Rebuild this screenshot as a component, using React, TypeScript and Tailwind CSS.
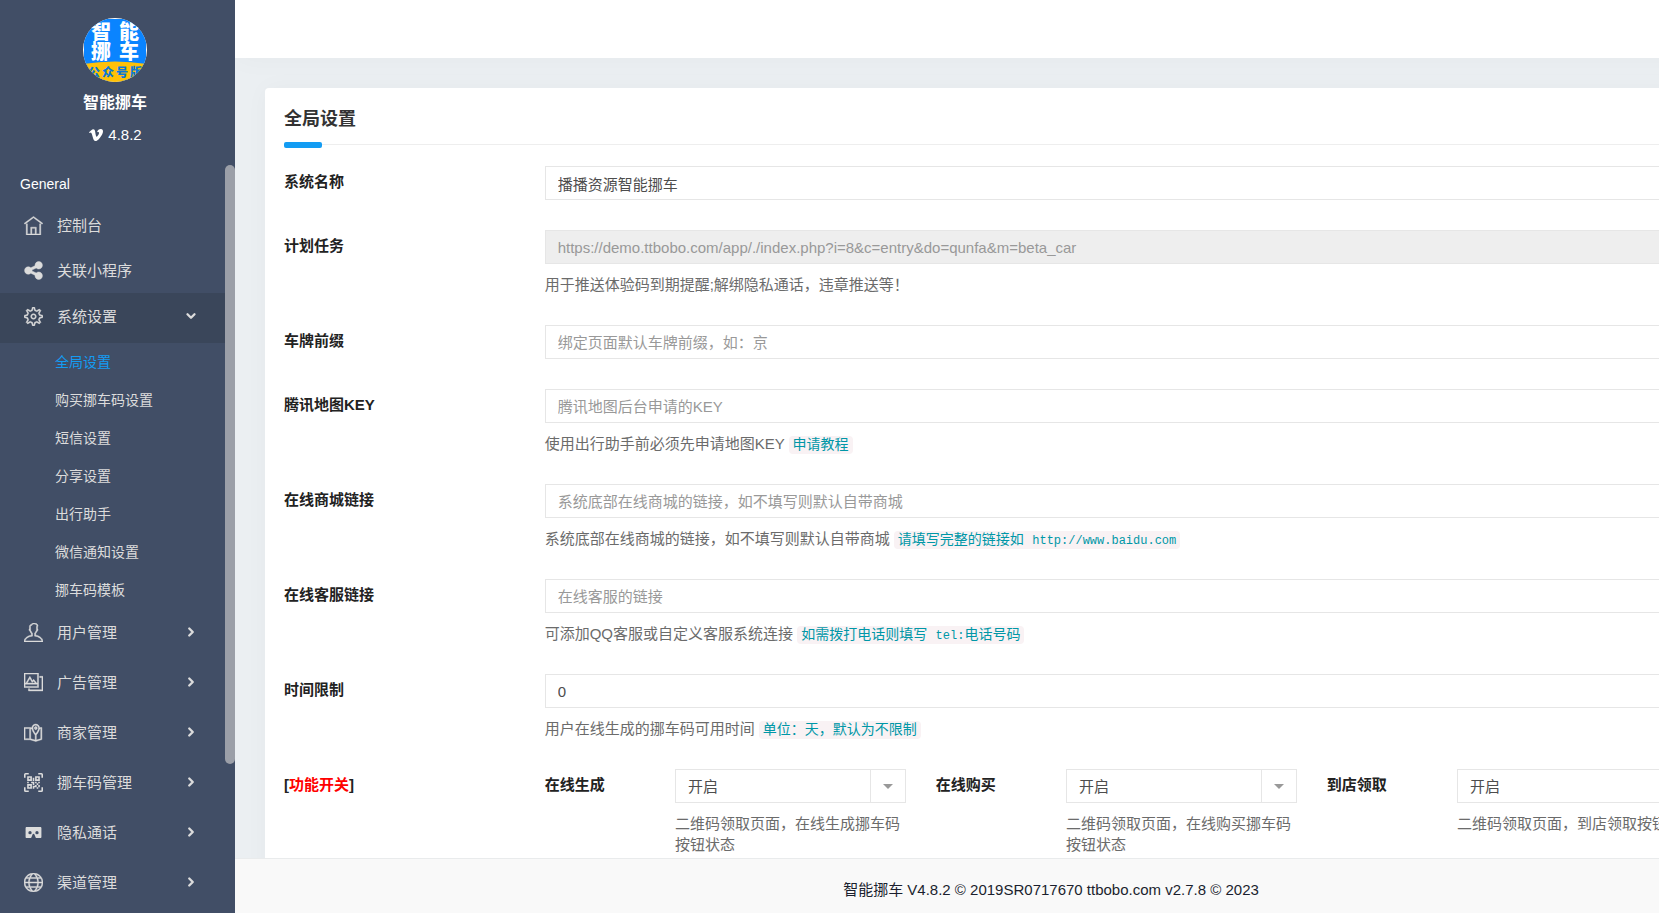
import React from 'react';
import { TfiHome, TfiSharethis, TfiSettings, TfiUser, TfiGallery, TfiMapAlt, TfiWorld } from 'react-icons/tfi';
import { FaVimeoV } from 'react-icons/fa';
import { FiChevronDown, FiChevronRight } from 'react-icons/fi';

type IconType = React.ComponentType<{ className?: string }>;

function QrScanIcon({ className }: { className?: string }) {
  return (
    <svg viewBox="0 0 24 24" fill="currentColor" className={className} aria-hidden="true">
      <path d="M4 4h6v6H4V4m16 0v6h-6V4h6m-6 11h2v-2h-2v-2h2v2h2v-2h2v2h-2v2h2v3h-2v2h-2v-2h-3v2h-2v-4h3v-1m2 0v3h2v-3h-2M4 20v-6h6v6H4M6 6v2h2V6H6m10 0v2h2V6h-2M6 16v2h2v-2H6m-2-5h2v2H4v-2m5 0h4v4h-2v-2H9v-2m2-5h2v4h-2V6M2 2v4H0V2a2 2 0 0 1 2-2h4v2H2m20-2a2 2 0 0 1 2 2v4h-2V2h-4V0h4M2 18v4h4v2H2a2 2 0 0 1-2-2v-4h2m20 4v-4h2v4a2 2 0 0 1-2 2h-4v-2h4z" />
    </svg>
  );
}

function CardboardIcon({ className }: { className?: string }) {
  return (
    <svg viewBox="0 0 24 24" fill="currentColor" className={className} aria-hidden="true">
      <path d="M20.700 5H3.300C2.600 5 2 5.600 2 6.300v11.400c0 .7.6 1.300 1.300 1.300h4.800c.6 0 1-.3 1.200-.8l1.500-3.700c.2-.5.7-.8 1.200-.8s1 .3 1.200.8l1.500 3.700c.2.5.7.8 1.200.8h4.800c.7 0 1.300-.6 1.300-1.300V6.300c0-.7-.6-1.300-1.300-1.300M7.600 14.300a2.100 2.100 0 1 1 0-4.200 2.100 2.100 0 0 1 0 4.200m8.800 0a2.100 2.100 0 1 1 0-4.200 2.100 2.100 0 0 1 0 4.200z" />
    </svg>
  );
}

const topLinks: { label: string; icon: IconType }[] = [
  { label: '控制台', icon: TfiHome },
  { label: '关联小程序', icon: TfiSharethis },
];

const settingLinks = ['全局设置', '购买挪车码设置', '短信设置', '分享设置', '出行助手', '微信通知设置', '挪车码模板'];

const groups: { label: string; icon: IconType; thin?: boolean }[] = [
  { label: '用户管理', icon: TfiUser, thin: true },
  { label: '广告管理', icon: TfiGallery, thin: true },
  { label: '商家管理', icon: TfiMapAlt, thin: true },
  { label: '挪车码管理', icon: QrScanIcon },
  { label: '隐私通话', icon: CardboardIcon },
  { label: '渠道管理', icon: TfiWorld, thin: true },
];

const switches = [
  { id: 'online-create', label: '在线生成', help: '二维码领取页面，在线生成挪车码按钮状态' },
  { id: 'online-buy', label: '在线购买', help: '二维码领取页面，在线购买挪车码按钮状态' },
  { id: 'shop-pickup', label: '到店领取', help: '二维码领取页面，到店领取按钮状态' },
];

function Logo() {
  return (
    <svg viewBox="0 0 64 64" className="size-16" role="img" aria-label="智能挪车">
      <defs>
        <clipPath id="logo-clip">
          <circle cx="32" cy="32" r="32" />
        </clipPath>
      </defs>
      <g clipPath="url(#logo-clip)" fontFamily="'Noto Sans CJK SC', sans-serif" fontWeight="900">
        <rect width="64" height="64" fill="#fff" />
        <rect x="1" y="1" width="62" height="62" fill="#0a84ff" />
        <path d="M0 46Q32 41 64 46V64H0z" fill="#ffc107" />
        <g fill="#fff" fontSize="20">
          <text x="8" y="21">智</text>
          <text x="36" y="21">能</text>
          <text x="8" y="41">挪</text>
          <text x="36" y="41">车</text>
        </g>
        <g fill="#0a78d8" fontSize="12">
          <text x="5" y="59">公</text>
          <text x="19" y="59">众</text>
          <text x="33" y="59">号</text>
          <text x="47" y="59">版</text>
        </g>
      </g>
    </svg>
  );
}

function Sidebar() {
  return (
    <aside className="flex w-[235px] shrink-0 flex-col overflow-hidden bg-[#414e66] text-[#dcdcdc]">
      <div className="flex h-[165px] shrink-0 flex-col items-center pt-[18px] pr-[5px] text-white">
        <Logo />
        <strong className="mt-[9px] text-base leading-6">智能挪车</strong>
        <span className="mt-2 flex items-center gap-1 text-[15px] leading-6">
          <FaVimeoV className="size-4" />
          4.8.2
        </span>
      </div>
      <div className="flex min-h-0 flex-1">
        <nav className="min-w-0 flex-1 text-[15px]">
          <div className="flex h-[38px] items-center pl-5 text-sm text-white">General</div>
          {topLinks.map(({ label, icon: Icon }) => (
            <a key={label} href="#" className="flex h-[45px] items-center gap-[14px] pl-6">
              <Icon className="size-[19px] stroke-current stroke-[0.4px]" />
              {label}
            </a>
          ))}
          <a href="#" className="flex h-[50px] items-center gap-[14px] bg-[#3a465a] pr-[27px] pb-1 pl-6">
            <TfiSettings className="size-[19px] stroke-current stroke-[0.4px]" />
            <span className="flex-1">系统设置</span>
            <FiChevronDown className="size-[14px] stroke-4" />
          </a>
          <ul className="text-sm">
            {settingLinks.map((label, i) => (
              <li key={label}>
                <a href="#" className={`flex h-[38px] items-center pl-[55px] ${i === 0 ? 'text-[#139cf3]' : ''}`}>{label}</a>
              </li>
            ))}
          </ul>
          {groups.map(({ label, icon: Icon, thin }) => (
            <a key={label} href="#" className="flex h-[50px] items-center gap-[14px] pr-[27px] pb-1 pl-6">
              <Icon className={`size-[19px] ${thin ? 'stroke-current stroke-[0.4px]' : ''}`} />
              <span className="flex-1">{label}</span>
              <FiChevronRight className="size-[14px] stroke-4" />
            </a>
          ))}
        </nav>
        <div className="h-[599px] w-[10px] shrink-0 rounded-full bg-[#9b9fa8]" />
      </div>
    </aside>
  );
}

function Code({ children }: { children: React.ReactNode }) {
  return <code className="rounded bg-[#f9f2f4] px-1 py-px font-[Liberation_Mono,Noto_Sans_CJK_SC,monospace] text-sm leading-4 text-[#0097a7]">{children}</code>;
}

interface FieldProps {
  id: string;
  label: string;
  value?: string;
  placeholder?: string;
  disabled?: boolean;
  children?: React.ReactNode;
}

function Field({ id, label, value, placeholder, disabled, children }: FieldProps) {
  return (
    <div className="mb-[30px] grid grid-cols-12">
      <label htmlFor={id} className="col-span-2 pt-[5px] font-bold text-[#222]">{label}</label>
      <div className="col-span-10">
        <input
          id={id}
          type="text"
          defaultValue={value}
          placeholder={placeholder}
          disabled={disabled}
          className="block h-[34px] w-full border border-[#e6e6e6] bg-white px-3 text-[#4d4d4d] placeholder:text-[#999] disabled:bg-[#eee] disabled:text-[#999]"
        />
        {children && <p className="mt-[10px]">{children}</p>}
      </div>
    </div>
  );
}

export default function App() {
  return (
    <div className="flex h-screen overflow-hidden bg-[#ebeff2] font-[Liberation_Sans,Noto_Sans_CJK_SC,sans-serif] text-[15px] leading-[21px] text-[#6b6b6b]">
      <Sidebar />
      <div className="flex min-w-0 flex-1 flex-col overflow-hidden">
        <header className="h-[58px] min-w-[1632px] shrink-0 bg-white shadow-[0_0_30px_rgba(0,0,0,0.03)]" />
        <main className="min-h-0 min-w-[1632px] flex-1 overflow-hidden p-[30px]">
          <section className="rounded-sm bg-white px-[19px] pt-[18px] pb-[30px] shadow-[0_0_24px_rgba(0,0,0,0.03)]">
            <div className="mb-[21px] border-b border-[#eee]">
              <h1 className="h-9 text-lg leading-[26px] font-bold text-[#333]">全局设置</h1>
              <div className="-mb-1 h-[6px] w-[38px] rounded-xs bg-[#139cf3]" />
            </div>
            <form className="-mr-[30px]">
              <Field id="name" label="系统名称" value="播播资源智能挪车" />
              <Field id="task" label="计划任务" value="https://demo.ttbobo.com/app/./index.php?i=8&c=entry&do=qunfa&m=beta_car" disabled>
                用于推送体验码到期提醒;解绑隐私通话，违章推送等！
              </Field>
              <Field id="plate" label="车牌前缀" placeholder="绑定页面默认车牌前缀，如：京" />
              <Field id="map-key" label="腾讯地图KEY" placeholder="腾讯地图后台申请的KEY">
                使用出行助手前必须先申请地图KEY <a href="#"><Code>申请教程</Code></a>
              </Field>
              <Field id="mall" label="在线商城链接" placeholder="系统底部在线商城的链接，如不填写则默认自带商城">
                系统底部在线商城的链接，如不填写则默认自带商城 <Code>请填写完整的链接如 <span className="text-xs">http://www.baidu.com</span></Code>
              </Field>
              <Field id="service" label="在线客服链接" placeholder="在线客服的链接">
                可添加QQ客服或自定义客服系统连接 <Code>如需拨打电话则填写 <span className="text-xs">tel:</span>电话号码</Code>
              </Field>
              <Field id="limit" label="时间限制" value="0">
                用户在线生成的挪车码可用时间 <Code>单位：天，默认为不限制</Code>
              </Field>
              <div className="grid grid-cols-12">
                <div className="col-span-2 pt-[5px] font-bold text-[#222]">[<span className="text-[#f00]">功能开关</span>]</div>
                {switches.map((item) => (
                  <React.Fragment key={item.id}>
                    <label htmlFor={item.id} className="pt-[5px] font-bold text-[#222]">{item.label}</label>
                    <div className="col-span-2 pr-[30px] last:pr-0">
                      <div className="grid h-[34px] border border-[#e6e6e6]">
                        <select id={item.id} className="col-start-1 row-start-1 w-full appearance-none px-3 text-[#4d4d4d]">
                          <option>开启</option>
                          <option>关闭</option>
                        </select>
                        <span className="pointer-events-none col-start-1 row-start-1 flex w-[35px] items-center justify-center justify-self-end border-l border-[#e6e6e6]">
                          <span className="border-x-5 border-t-5 border-x-transparent border-t-[#999]" />
                        </span>
                      </div>
                      <p className="mt-[10px]">{item.help}</p>
                    </div>
                  </React.Fragment>
                ))}
              </div>
            </form>
          </section>
        </main>
        <footer className="flex h-[55px] min-w-[1632px] shrink-0 items-center justify-center border-t border-[#e9ebec] bg-[#f9f9f9] pt-[6px] text-[#1b1f2e]">
          智能挪车 V4.8.2 © 2019SR0717670 ttbobo.com v2.7.8 © 2023
        </footer>
      </div>
    </div>
  );
}
